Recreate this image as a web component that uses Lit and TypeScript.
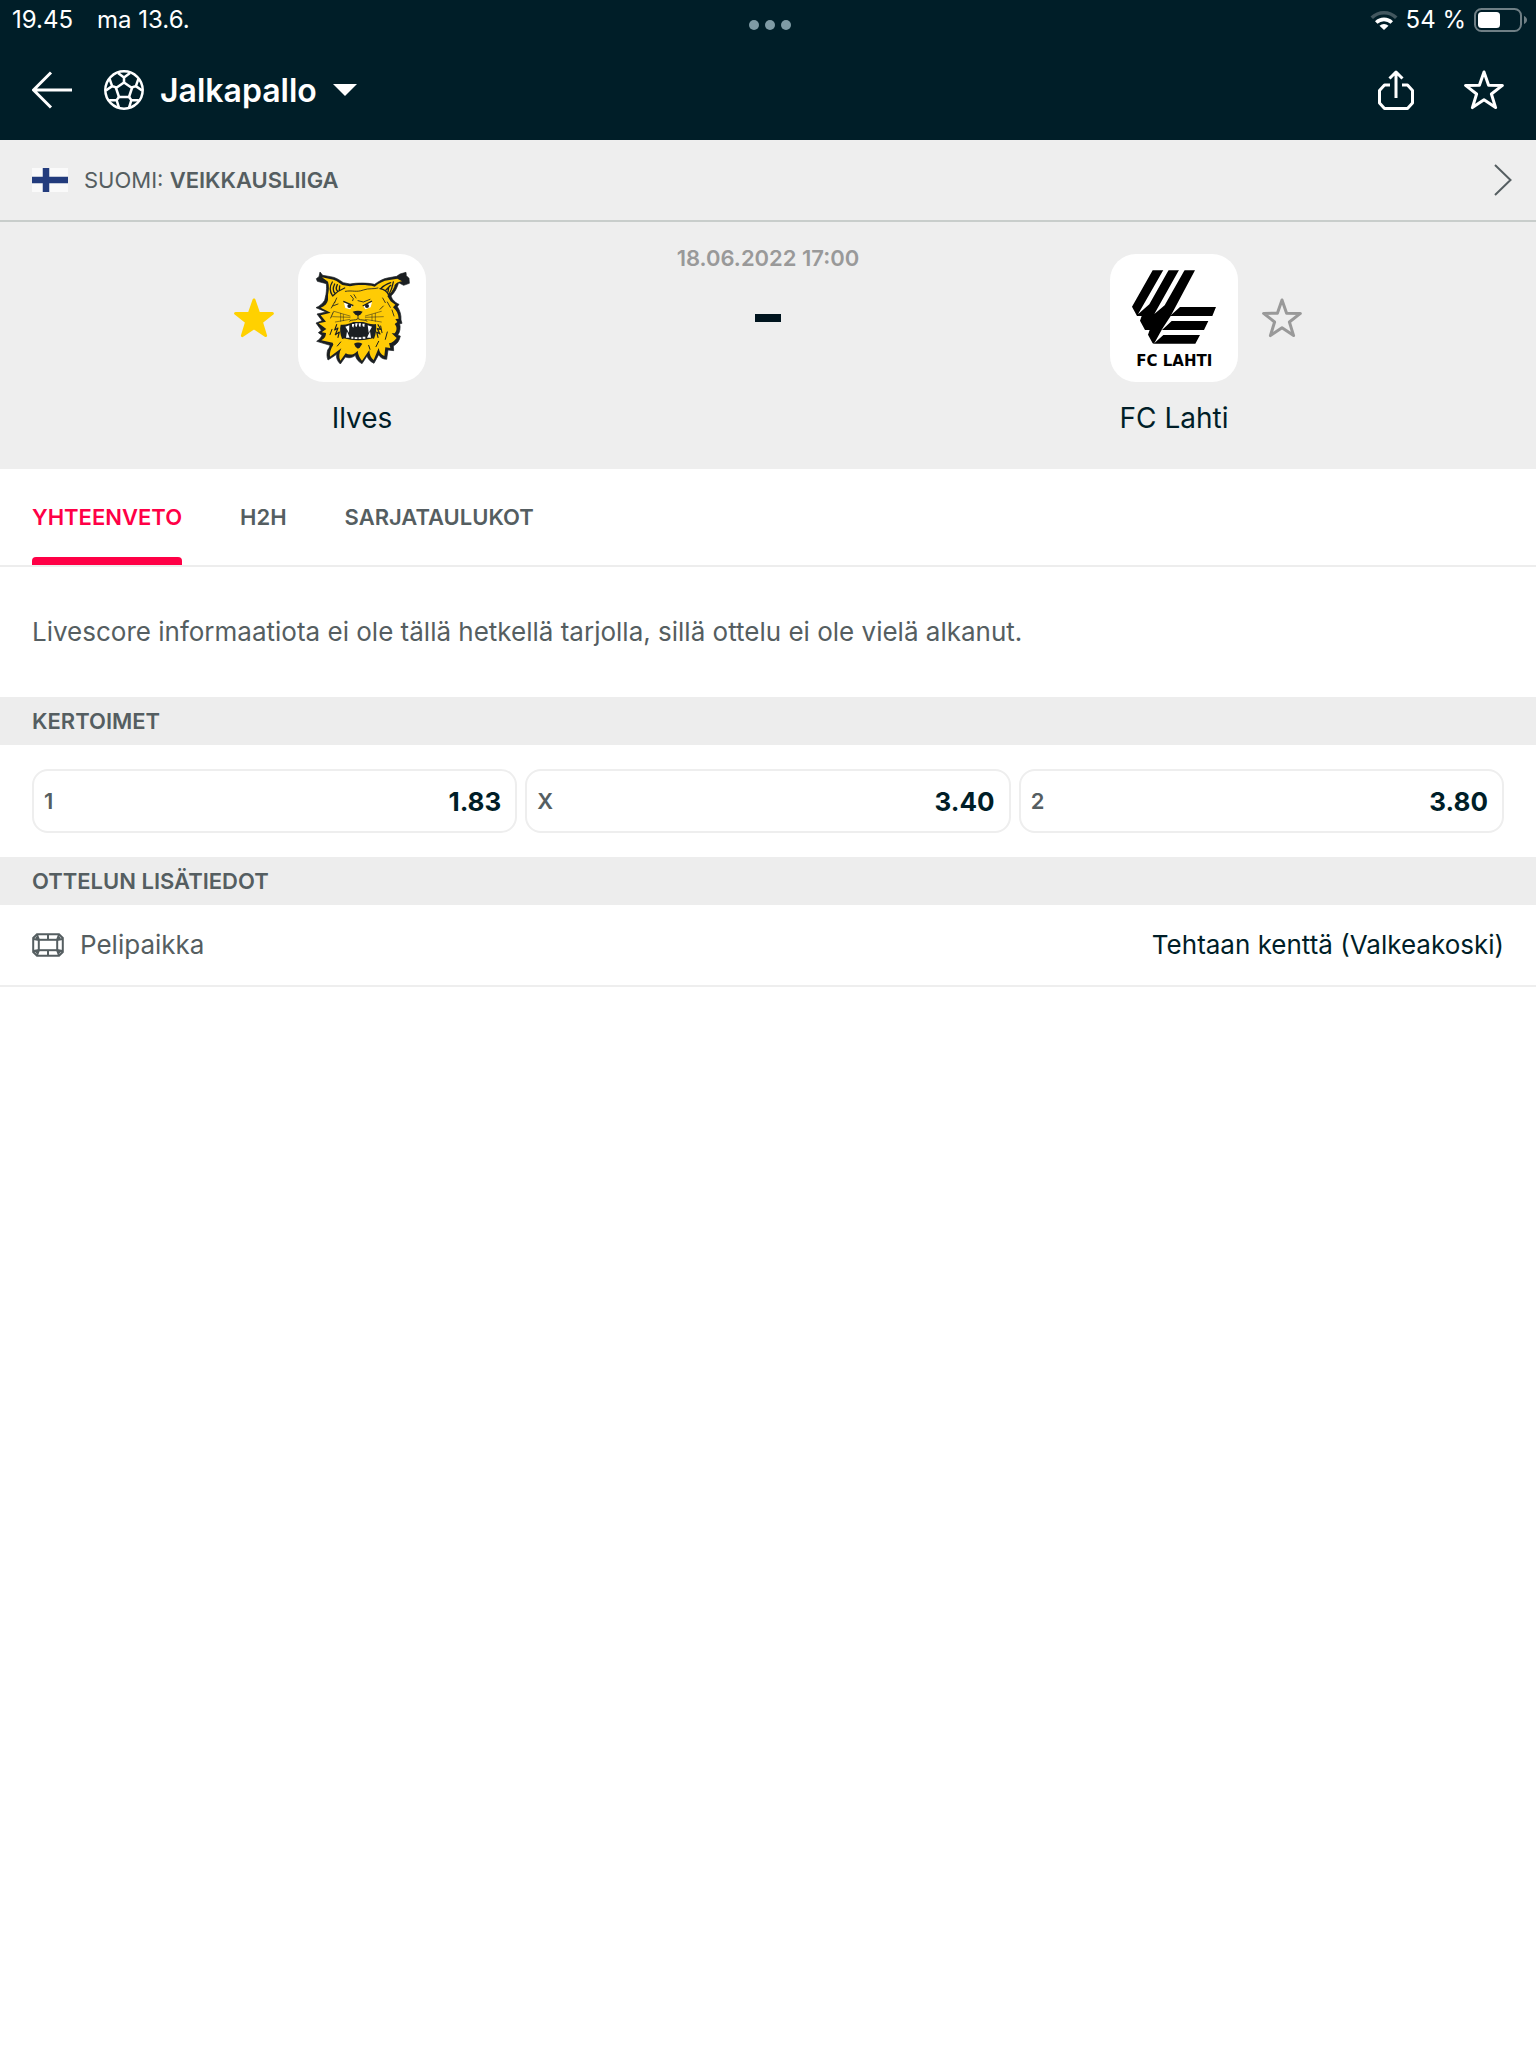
import { LitElement, html, css, svg } from "lit";
import { customElement, property, state } from "lit/decorators.js";
import { classMap } from "lit/directives/class-map.js";

const STAR = "M20 2 L24.6 15.2 L38.4 15.4 L27.4 24 L31.6 37.6 L20 29.8 L8.4 37.6 L12.6 24 L1.6 15.4 L15.4 15.2 Z";

const starIcon = (kind: string) => html`
  <svg class="star ${kind}" viewBox="0 0 40 40" aria-hidden="true"><path d=${STAR} /></svg>`;

const backIcon = html`
  <svg class="icon" viewBox="0 0 40 40" aria-hidden="true">
    <path d="M40 20H2M19 2.5L1.5 20L19 37.5" />
  </svg>`;

const ballIcon = html`
  <svg class="icon ball" viewBox="-20 -20 40 40" aria-hidden="true">
    <circle r="18.7" />
    <path d="M0 -7.5L8 -2L5 7H-5L-8 -2Z" />
    ${[0, 72, 144, 216, 288].map(
      (a) => svg`<path transform="rotate(${a})" d="M0 -7.5V-12M-6 -17L0 -12.5L6 -17" />`
    )}
  </svg>`;

const shareIcon = html`
  <svg class="icon" viewBox="0 0 40 40" aria-hidden="true">
    <path d="M14 15H8.5L3.5 20.5V33L8.5 38.5H31.5L36.5 33V20.5L31.5 15H26M20 28V2M13.5 8.5L20 2L26.5 8.5" />
  </svg>`;

const wifiIcon = html`
  <svg class="wifi" viewBox="0 0 28 20" aria-hidden="true">
    <path class="faint" d="M0.5 6.5A19.5 19.5 0 0 1 27.5 6.5L25 9A16 16 0 0 0 3 9Z" />
    <path d="M5 11.2A13 13 0 0 1 23 11.2L20.5 13.7A9.5 9.5 0 0 0 7.5 13.7Z" />
    <path d="M9.500 15.8A6.5 6.5 0 0 1 18.5 15.8L14 20Z" />
  </svg>`;

const batteryIcon = html`
  <svg class="battery" viewBox="0 0 54 24" aria-hidden="true">
    <rect class="shell" x="1" y="1" width="46" height="22" rx="6.5" />
    <rect x="4" y="4" width="22" height="16" rx="3.5" />
    <path class="cap" d="M50 8C54 9.5 54 14.5 50 16Z" />
  </svg>`;

const flagIcon = html`
  <svg class="flag" viewBox="0 0 36 24" role="img" aria-label="Suomi">
    <rect width="36" height="24" fill="#fafafa" />
    <path d="M0 12H36M14 0V24" stroke="#233c7d" stroke-width="6.5" />
  </svg>`;

const venueIcon = html`
  <svg class="venue-icon" viewBox="0 0 32 24" aria-hidden="true">
    <path d="M5 1.2H27L30.8 5V19L27 22.8H5L1.2 19V5Z" />
    <rect x="6.8" y="6.8" width="18.4" height="10.4" />
    <path d="M16 1V7M16 17V23M7 7L1.5 6M7 7L5 1.5M25 7L30.5 6M25 7L27 1.5M7 17L1.5 18M7 17L5 22.5M25 17L30.5 18M25 17L27 22.5M4 4L7 7M28 4L25 7M4 20L7 17M28 20L25 17" />
  </svg>`;

const ilvesCrest = html`
  <svg class="crest" viewBox="-6 -18 384 384" role="img" aria-label="Ilves">
    <path
      d="M60 36L68 46L92 50C108 52 118 60 130 68L150 72C170 68 205 68 224 73C236 64 250 56 262 54L290 49L300 42L318 37L319 47L327 55L328 70L311 76L296 68C291 84 284 98 273 108L277 117C283 125 290 130 297 133L292 140C300 152 304 165 303 180L306 190L299 191C302 203 300 216 293 226L301 228C298 243 291 252 280 258L281 272L264 270L260 298C249 298 240 292 236 284L222 310C211 305 204 297 201 288L186 311C176 306 168 297 166 286C156 295 144 294 136 291L121 312C112 303 108 294 110 283L84 300C80 290 80 281 83 270C88 264 90 258 90 256L50 244C57 240 63 233 66 226L55 218L64 211L48 189L66 182L51 162L78 156L48 143C60 138 68 130 74 121L78 103C80 88 80 82 79 71L52 64L49 56L57 50Z"
      fill="#1b1f22" stroke="#1b1f22" stroke-width="2" stroke-linejoin="round" />
    <path
      d="M66 52L90 57C105 59 115 66 127 75L150 79C172 74 202 74 224 80C238 69 252 62 264 61L292 56L306 64C291 66 284 72 283 80C278 92 271 100 262 108L272 124L286 134L279 142C290 151 295 162 296 176L286 177L292 186L284 192C292 201 291 212 284 220L275 220L290 234C283 243 277 248 267 250L271 264L256 262L253 288C243 284 238 276 236 264L221 300C213 294 208 284 208 270L186 302C180 295 174 284 173 272C162 286 148 286 137 280L121 302C116 292 117 278 124 265L90 290C88 279 92 266 100 254L98 248L64 241C75 235 78 227 78 219L65 217L79 207L56 190L78 185L62 166L92 158L62 143C76 138 82 129 84 119L84 104C87 90 88 78 84 65Z"
      fill="#ffcb05" />
    <g fill="none" stroke="#1b1f22" stroke-width="3" stroke-linecap="round" stroke-linejoin="round">
      <path d="M97 66C88 80 90 96 98 108C106 100 118 90 134 84M104 72C98 84 99 94 105 100M112 74C108 82 108 90 113 94M119 78L118 90" stroke-width="4" />
      <path d="M240 86C254 88 262 96 266 105C274 92 278 78 280 66M272 68C262 72 250 78 244 84M272 76L258 90M266 82L264 96" stroke-width="4" />
      <path d="M136 94C158 90 168 98 190 90C206 84 222 88 234 84M152 106L160 116L158 122M162 104L168 114M174 122L190 126L210 118" stroke-width="2.500" />
      <path d="M104 126L94 144M100 156L92 174M262 126L271 142M276 150L282 168M98 138L114 132M110 114L104 128M248 114L256 128M240 148L250 138" stroke-width="2.500" />
      <path d="M150 168L102 154M150 172L98 170M150 178L106 186M196 168L244 154M196 172L250 170M196 178L244 186M122 160V184M130 164V182M216 164V182M226 160V184" stroke-width="1.500" />
      <path d="M96 208L90 224M242 198L246 218M262 216L256 238M236 244L228 260M112 258L122 246M206 256L210 268" />
      <path d="M110 194L104 210L114 204L106 224L118 216L114 232M234 194L242 208L232 206L240 222L230 216L234 232" stroke-width="3.500" />
    </g>
    <path d="M132 128L158 136L150 148L136 144Z" fill="#fff" />
    <path d="M190 138L216 126L212 142L196 148Z" fill="#fff" />
    <path d="M130 124L160 137M188 138L216 123" stroke="#1b1f22" stroke-width="4" />
    <circle cx="148" cy="138" r="6" fill="#1b1f22" />
    <circle cx="201" cy="138" r="6" fill="#1b1f22" />
    <path d="M158 155C168 151 180 151 188 155L182 163L174 168L165 163Z" fill="#1b1f22" />
    <path d="M174 166V176M148 184C154 177 166 183 174 176C184 183 194 177 202 184" stroke="#1b1f22" stroke-width="2.500" fill="none" />
    <path d="M122 194C138 196 150 190 160 186H190C202 190 214 194 228 192C230 208 228 222 222 236C192 244 154 244 126 236C120 222 119 208 122 194Z" fill="#1b1f22" />
    <path d="M136 200L148 196L147 218ZM203 196L216 200L206 218ZM156 192H163L160 203L156 199ZM166 190H173L170 201L166 199ZM176 190H183L181 201L177 199ZM187 191H194L193 201L188 199ZM138 233L141 214L149 233ZM201 233L210 214L213 233ZM154 230H160V236H154ZM164 232H172V237H164ZM176 232H184V237H176ZM188 230H196V236H188Z" fill="#fff" />
    <path d="M130 237C158 245 190 245 220 237" stroke="#ffcb05" stroke-width="4" fill="none" />
    <path d="M162 251C170 246 178 246 187 251L180 262L174 266L167 261Z" fill="#1b1f22" />
  </svg>`;

const lahtiCrest = html`
  <svg class="crest" viewBox="-30 -18 384 384" role="img" aria-label="FC Lahti">
    <path d="M98 31H225L152 168L126 208L102 251L98 250L84 224L89 210H75L60 182L65 168H51L36 140Z" />
    <path d="M150 168L180 141H288L277 168ZM126 210L155 183H265L252 210ZM101 251L130 225H240L226 251Z" />
    <path d="M130 30H146L88 133L54 163ZM177 30H194L134 136L103 162Z" fill="#fff" />
    <text class="crest-name" x="163" y="317" text-anchor="middle">FC LAHTI</text>
  </svg>`;

const TABS = ["YHTEENVETO", "H2H", "SARJATAULUKOT"];
const ODDS = [
  { label: "1", value: "1.83" },
  { label: "X", value: "3.40" },
  { label: "2", value: "3.80" },
];

@customElement("section-title")
class SectionTitle extends LitElement {
  static styles = css`
    :host { display: block; }
    .title {
      margin: 0;
      padding: 0 32px;
      background: #ededed;
      color: #555e61;
      font-size: 22px;
      font-weight: 600;
      line-height: 48px;
    }
  `;
  render() {
    return html`<h2 class="title"><slot></slot></h2>`;
  }
}

@customElement("team-badge")
class TeamBadge extends LitElement {
  @property() name = "";
  @property() side: "home" | "away" = "home";
  @property({ type: Boolean }) favourite = false;

  static styles = css`
    :host { display: flex; flex-direction: column; align-items: center; gap: 16px; }
    .row { display: grid; grid-template-columns: 40px 128px 40px; column-gap: 24px; align-items: center; }
    .logo { grid-column: 2; grid-row: 1; height: 128px; border-radius: 26px; background: #fff; overflow: hidden; }
    .crest { display: block; width: 100%; height: 100%; }
    .crest-name { font: 700 45px "DejaVu Sans", sans-serif; }
    .fav { grid-row: 1; padding: 0; border: 0; background: none; height: 40px; cursor: pointer; }
    .fav.home { grid-column: 1; }
    .fav.away { grid-column: 3; }
    .star { display: block; width: 40px; height: 40px; stroke-linejoin: round; }
    .filled { fill: #ffd100; stroke: #ffd100; stroke-width: 3; }
    .outline { fill: none; stroke: #999; stroke-width: 3; }
    .name { font-size: 28px; line-height: 40px; color: #001e28; }
  `;
  render() {
    return html`
      <div class="row">
        <button class="fav ${this.side}" aria-label="Suosikki: ${this.name}" aria-pressed=${this.favourite}
          @click=${() => (this.favourite = !this.favourite)}>
          ${starIcon(this.favourite ? "filled" : "outline")}
        </button>
        <div class="logo">${this.side === "home" ? ilvesCrest : lahtiCrest}</div>
      </div>
      <span class="name">${this.name}</span>`;
  }
}

@customElement("app-root")
class AppRoot extends LitElement {
  @state() private tab = TABS[0];

  static styles = css`
    :host {
      display: block;
      min-height: 100vh;
      background: #fff;
      color: #555e61;
      font-family: Inter, "Liberation Sans", sans-serif;
      font-size: 26px;
    }
    button { font: inherit; color: inherit; background: none; border: 0; padding: 0; cursor: pointer; }
    svg { display: block; flex: none; }

    .header { background: #001e28; color: #fff; }
    .status {
      display: grid;
      grid-template-columns: 1fr auto 1fr;
      align-items: center;
      height: 40px;
      padding: 0 8px 0 12px;
      font-size: 24px;
      line-height: 40px;
    }
    .clock { display: flex; gap: 24px; }
    .dots { display: flex; gap: 6px; padding-top: 10px; }
    .dot { width: 10px; height: 10px; border-radius: 50%; background: #7f9ba5; }
    .device { display: flex; justify-content: flex-end; align-items: center; gap: 8px; }
    .wifi { width: 28px; height: 20px; fill: #fff; }
    .faint { fill: #42575f; }
    .battery { width: 54px; height: 24px; fill: #fff; }
    .shell { fill: none; stroke: #6f7f85; stroke-width: 2; }
    .cap { fill: #6f7f85; }

    .nav { display: flex; align-items: center; height: 100px; padding: 0 32px; }
    .icon { width: 40px; height: 40px; fill: none; stroke: #fff; stroke-width: 3; stroke-linejoin: round; }
    .ball { stroke-width: 2.5; }
    .sport { display: flex; align-items: center; gap: 16px; margin-left: 32px; font-size: 32px; font-weight: 600; }
    .caret { width: 24px; height: 12px; fill: #fff; }
    .actions { display: flex; gap: 48px; margin-left: auto; }
    .star { width: 40px; height: 40px; fill: none; stroke: #fff; stroke-width: 3; stroke-linejoin: round; }

    .league {
      display: flex;
      align-items: center;
      gap: 16px;
      padding: 0 24px 0 32px;
      background: #eee;
      border-bottom: 2px solid #c8cdcb;
      color: #555e61;
      font-size: 22px;
      line-height: 80px;
      text-decoration: none;
    }
    .flag { width: 36px; height: 24px; }
    .strong { font-weight: 600; }
    .chevron { width: 18px; height: 32px; margin-left: auto; fill: none; stroke: #555e61; stroke-width: 2; }

    .match {
      display: grid;
      grid-template-columns: 1fr 184px 1fr;
      padding: 32px 48px 31px;
      background: #eee;
    }
    .middle { display: flex; flex-direction: column; align-items: center; gap: 52px; }
    .date { font-size: 22px; font-weight: 600; line-height: 8px; color: #999; white-space: nowrap; }
    .dash { width: 26px; height: 8px; background: #00141e; }

    .tabs { display: flex; gap: 58px; padding: 0 32px; border-bottom: 2px solid #ededed; }
    .tab {
      padding: 8px 0 0;
      border-bottom: 8px solid transparent;
      font-size: 22px;
      font-weight: 600;
      line-height: 80px;
    }
    .tab.active { color: #ff0046; }
    .tab.active::after { content: ""; display: block; height: 8px; margin-bottom: -8px; border-radius: 4px 4px 0 0; background: #ff0046; }

    .notice { margin: 0; padding: 45px 32px; line-height: 40px; }

    .odds { display: grid; grid-template-columns: repeat(3, 1fr); gap: 8px; padding: 24px 32px; }
    .odd {
      display: flex;
      justify-content: space-between;
      align-items: center;
      height: 64px;
      padding: 0 14px 0 10px;
      border: 2px solid #eee;
      border-radius: 16px;
    }
    .label { font-size: 22px; font-weight: 600; }
    .value { font-weight: 700; color: #001e28; }

    .info {
      display: flex;
      align-items: center;
      gap: 16px;
      padding: 0 32px;
      border-bottom: 2px solid #eee;
      line-height: 80px;
    }
    .venue-icon { width: 32px; height: 24px; fill: none; stroke: #555e61; stroke-width: 2; }
    .venue { margin-left: auto; color: #001e28; }
  `;

  render() {
    return html`
      <header class="header">
        <div class="status">
          <div class="clock"><span>19.45</span><span>ma 13.6.</span></div>
          <div class="dots"><span class="dot"></span><span class="dot"></span><span class="dot"></span></div>
          <div class="device">${wifiIcon}<span>54 %</span>${batteryIcon}</div>
        </div>
        <nav class="nav">
          <button aria-label="Takaisin">${backIcon}</button>
          <button class="sport">
            ${ballIcon}<span>Jalkapallo</span>
            <svg class="caret" viewBox="0 0 24 12" aria-hidden="true"><path d="M0 0H24L12 12Z" /></svg>
          </button>
          <div class="actions">
            <button aria-label="Jaa">${shareIcon}</button>
            <button aria-label="Suosikki">${starIcon("")}</button>
          </div>
        </nav>
      </header>
      <a class="league" href="#veikkausliiga">
        ${flagIcon}
        <span>SUOMI: <span class="strong">VEIKKAUSLIIGA</span></span>
        <svg class="chevron" viewBox="0 0 18 32" aria-hidden="true"><path d="M1 1L16.5 16L1 31" /></svg>
      </a>
      <main>
        <section class="match">
          <team-badge name="Ilves" side="home" favourite></team-badge>
          <div class="middle">
            <time class="date" datetime="2022-06-18T17:00">18.06.2022 17:00</time>
            <span class="dash"></span>
          </div>
          <team-badge name="FC Lahti" side="away"></team-badge>
        </section>
        <div class="tabs" role="tablist">
          ${TABS.map(
            (t) => html`<button role="tab" aria-selected=${t === this.tab}
              class=${classMap({ tab: true, active: t === this.tab })}
              @click=${() => (this.tab = t)}>${t}</button>`
          )}
        </div>
        <p class="notice">Livescore informaatiota ei ole tällä hetkellä tarjolla, sillä ottelu ei ole vielä alkanut.</p>
        <section-title>KERTOIMET</section-title>
        <div class="odds">
          ${ODDS.map(
            (o) => html`<button class="odd"><span class="label">${o.label}</span><span class="value">${o.value}</span></button>`
          )}
        </div>
        <section-title>OTTELUN LISÄTIEDOT</section-title>
        <div class="info">
          ${venueIcon}<span>Pelipaikka</span><span class="venue">Tehtaan kenttä (Valkeakoski)</span>
        </div>
      </main>`;
  }
}
